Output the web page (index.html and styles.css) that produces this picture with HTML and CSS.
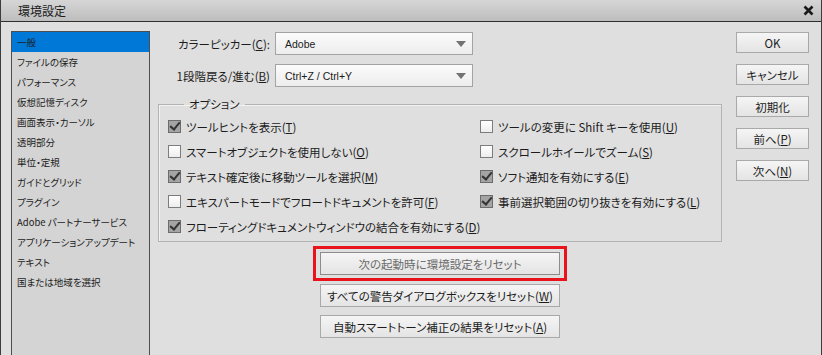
FILE: index.html
```html
<!DOCTYPE html>
<html lang="ja">
<head>
    <meta charset="UTF-8">
    <title>環境設定</title>
    <link rel="stylesheet" href="styles.css">
</head>
<body>
    <div class="window">
        <div class="titlebar">
            <span class="title">環境設定</span>
            <svg class="close" width="11" height="11" viewBox="0 0 11 11">
                <path d="M1.5 1.5 L9.5 9.5 M9.5 1.5 L1.5 9.5" stroke="#1a1a1a" stroke-width="2.6" />
            </svg>
        </div>
        <div class="content">
            <ul class="nav">
                <li class="selected">一般</li>
                <li>ファイルの保存</li>
                <li>パフォーマンス</li>
                <li>仮想記憶ディスク</li>
                <li>画面表示・カーソル</li>
                <li>透明部分</li>
                <li>単位・定規</li>
                <li>ガイドとグリッド</li>
                <li>プラグイン</li>
                <li>Adobe パートナーサービス</li>
                <li>アプリケーションアップデート</li>
                <li>テキスト</li>
                <li>国または地域を選択</li>
            </ul>

            <div class="main">
                <div class="field">
                    <label>カラーピッカー(<u>C</u>):</label>
                    <div class="select">Adobe<span class="arrow"></span></div>
                </div>
                <div class="field">
                    <label>1段階戻る/進む(<u>B</u>)</label>
                    <div class="select">Ctrl+Z / Ctrl+Y<span class="arrow"></span></div>
                </div>

                <fieldset class="options">
                    <legend>オプション</legend>
                    <div class="opt-grid">
                        <div class="opt"><span class="box checked"></span>ツールヒントを表示(<u>T</u>)</div>
                        <div class="opt"><span class="box"></span>ツールの変更に Shift キーを使用(<u>U</u>)</div>
                        <div class="opt"><span class="box"></span>スマートオブジェクトを使用しない(<u>O</u>)</div>
                        <div class="opt"><span class="box"></span>スクロールホイールでズーム(<u>S</u>)</div>
                        <div class="opt"><span class="box checked"></span>テキスト確定後に移動ツールを選択(<u>M</u>)</div>
                        <div class="opt"><span class="box checked"></span>ソフト通知を有効にする(<u>E</u>)</div>
                        <div class="opt"><span class="box"></span>エキスパートモードでフロートドキュメントを許可(<u>F</u>)</div>
                        <div class="opt"><span class="box checked"></span>事前選択範囲の切り抜きを有効にする(<u>L</u>)</div>
                        <div class="opt wide"><span class="box checked"></span>フローティングドキュメントウィンドウの結合を有効にする(<u>D</u>)</div>
                    </div>
                </fieldset>

                <div class="highlight">
                    <button class="btn reset dim">次の起動時に環境設定をリセット</button>
                </div>
                <button class="btn reset second">すべての警告ダイアログボックスをリセット(<u>W</u>)</button>
                <button class="btn reset third">自動スマートトーン補正の結果をリセット(<u>A</u>)</button>
            </div>

            <div class="actions">
                <button class="btn side">OK</button>
                <button class="btn side">キャンセル</button>
                <button class="btn side">初期化</button>
                <button class="btn side">前へ(<u>P</u>)</button>
                <button class="btn side">次へ(<u>N</u>)</button>
            </div>
        </div>
    </div>
</body>
</html>
```

FILE: styles.css
```css
body {
    margin: 0;
    font-family: "Noto Sans CJK JP", sans-serif;
    font-feature-settings: "palt";
    color: #1c1c1c;
    background: #dfdfdf;
}

.window {
    width: 822px;
    height: 355px;
    box-sizing: border-box;
    border-left: 1px solid #3c3c3c;
    border-right: 1px solid #3c3c3c;
    background: #dfdfdf;
    overflow: hidden;
}

.titlebar {
    height: 21px;
    border-top: 1px solid #6a6a6a;
    border-bottom: 1px solid #2e2e2e;
    box-sizing: content-box;
    background: linear-gradient(#d6d6d6, #bdbdbd);
    display: flex;
    align-items: center;
    justify-content: space-between;
    padding: 0 7px 0 17px;
    margin-top: -1px;
}

.title {
    font-size: 12px;
    line-height: 1;
}

.content {
    display: flex;
    height: 333px;
}

/* left category list */
.nav {
    list-style: none;
    margin: 9px 0 0 10px;
    padding: 0;
    width: 139px;
    flex: none;
    box-sizing: border-box;
    border: 1px solid #4e4e4e;
    border-bottom: none;
    background: #d4d4d4;
}

.nav li {
    height: 20px;
    line-height: 20px;
    padding-left: 5px;
    font-size: 9.5px;
    white-space: nowrap;
}

.nav li.selected {
    background: #0078d7;
}

.main {
    width: 564px;
    flex: none;
    padding: 10px 0 0 8px;
    display: flex;
    flex-direction: column;
    align-items: center;
}

.field {
    display: flex;
    align-items: center;
    align-self: stretch;
    margin-bottom: 9px;
}

.field label {
    width: 112px;
    margin-right: 5px;
    text-align: right;
    font-size: 11.5px;
    white-space: nowrap;
}

.select {
    width: 198px;
    height: 23px;
    box-sizing: border-box;
    border: 1px solid #a3a3a3;
    background: linear-gradient(#fbfbfb, #ededed);
    display: flex;
    align-items: center;
    justify-content: space-between;
    padding: 0 6px 0 9px;
    font-family: "Liberation Sans", sans-serif;
    font-size: 10.5px;
}

.arrow {
    width: 0;
    height: 0;
    border-left: 5px solid transparent;
    border-right: 5px solid transparent;
    border-top: 6px solid #727272;
}

/* option checkboxes */
.options {
    align-self: stretch;
    margin: 1px 0 0;
    padding: 3px 0 2px 9px;
    border: 1px solid #b3b3b3;
    box-shadow: inset 1px 1px 0 #f2f2f2;
}

.options legend {
    margin-left: 16px;
    padding: 0 5px;
    font-size: 11.5px;
    line-height: 14px;
}

.opt-grid {
    display: grid;
    grid-template-columns: 312px 1fr;
    grid-auto-rows: 25px;
}

.opt {
    display: flex;
    align-items: center;
    font-size: 11.5px;
    white-space: nowrap;
}

.opt.wide {
    grid-column: span 2;
}

.box {
    width: 13px;
    height: 13px;
    box-sizing: border-box;
    margin-right: 5px;
    border: 1px solid #7c7c7c;
    background: linear-gradient(#ffffff, #ededed);
    flex: none;
}

.box.checked {
    background: #a4a4a4;
    border-color: #6c6c6c;
    position: relative;
}

.box.checked::after {
    content: "";
    position: absolute;
    left: 3px;
    top: -1px;
    width: 4px;
    height: 8px;
    border-right: 2.5px solid #333;
    border-bottom: 2.5px solid #333;
    transform: rotate(40deg);
}

/* buttons */
.btn {
    font-family: inherit;
    font-feature-settings: "palt";
    color: #1c1c1c;
    border: 1px solid #a9a9a9;
    background: linear-gradient(#f5f5f5, #e4e4e4);
    padding: 0;
    box-sizing: border-box;
    white-space: nowrap;
}

.reset {
    width: 240px;
    height: 23px;
    font-size: 11.5px;
}

.reset.dim {
    color: #6a6a6a;
    border-color: #8c8c8c;
}

.highlight {
    margin-top: 4px;
    border: 3px solid #e8131b;
    padding: 3px 4px 3px 4px;
    display: flex;
}

.reset.second {
    margin-top: 3px;
}

.reset.third {
    margin-top: 8px;
}

.actions {
    width: 73px;
    flex: none;
    margin-left: 14px;
    padding-top: 10px;
    display: flex;
    flex-direction: column;
    gap: 11px;
}

.side {
    height: 21px;
    font-size: 11.5px;
}
```
